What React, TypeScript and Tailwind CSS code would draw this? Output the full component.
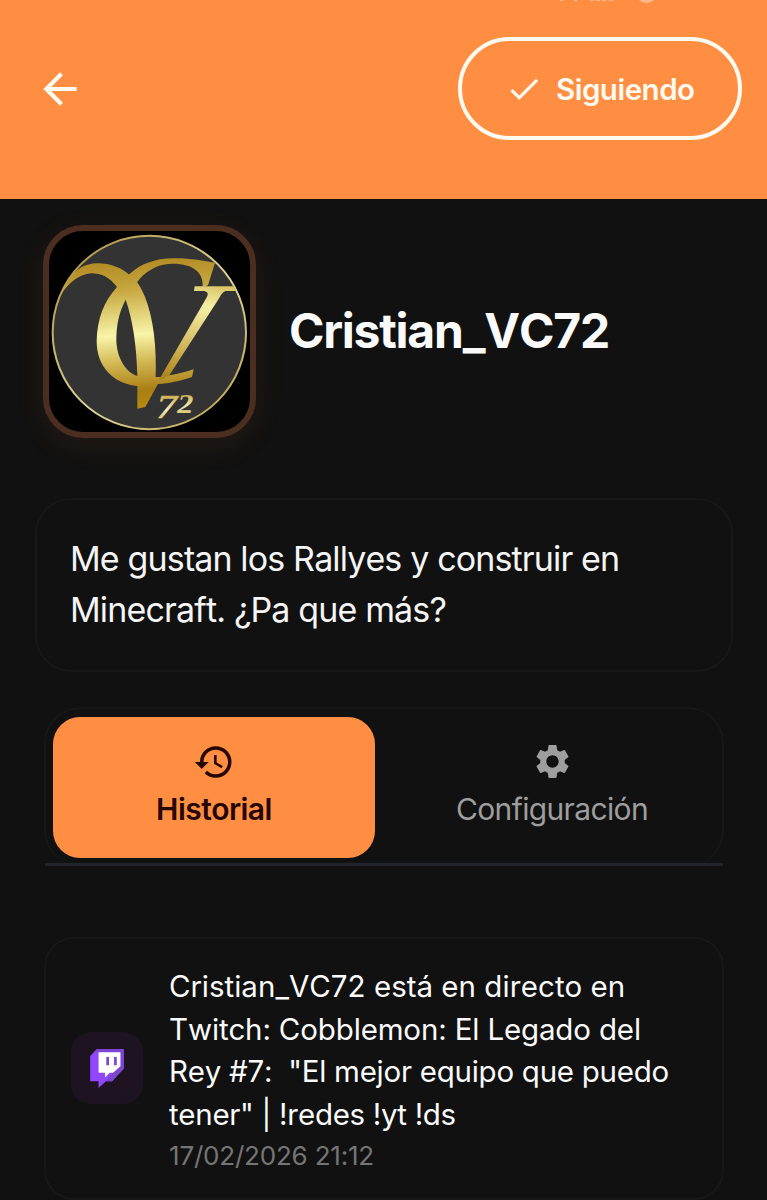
import { MdArrowBack, MdCheck, MdHistory, MdSettings } from "react-icons/md";

const bio = [
  { text: "Me gustan los Rallyes y construir en", spacing: "tracking-[-0.850px]" },
  { text: "Minecraft. ¿Pa que más?", spacing: "tracking-[-0.850px]" },
];

const event = [
  { text: "Cristian_VC72 está en directo en", spacing: "tracking-[0.030px]" },
  { text: "Twitch: Cobblemon: El Legado del", spacing: "tracking-[-0.150px]" },
  { text: 'Rey #7:  "El mejor equipo que puedo', spacing: "tracking-[-0.260px]" },
  { text: 'tener" | !redes !yt !ds', spacing: "tracking-[-0.300px]" },
];

function Avatar() {
  return (
    <div className="h-[213px] w-[213px] shrink-0 overflow-hidden rounded-[40px] border-[6px] border-[#4b2e20] bg-black shadow-[0_8px_32px_rgba(255,142,67,0.08)]">
      <svg viewBox="87 95 603 603" className="block h-full w-full">
        <defs>
          <linearGradient id="gold" gradientUnits="userSpaceOnUse" x1="350" y1="180" x2="385" y2="628">
            <stop offset="0" stopColor="#b18a22" />
            <stop offset="0.2" stopColor="#c8a840" />
            <stop offset="0.5" stopColor="#f8f5a8" />
            <stop offset="0.68" stopColor="#d3b854" />
            <stop offset="0.88" stopColor="#a97d12" />
            <stop offset="1" stopColor="#b98c14" />
          </linearGradient>
          <linearGradient id="goldThin" gradientUnits="userSpaceOnUse" x1="560" y1="190" x2="480" y2="545">
            <stop offset="0" stopColor="#c3a02f" />
            <stop offset="0.35" stopColor="#f4efa6" />
            <stop offset="0.65" stopColor="#d9c26a" />
            <stop offset="1" stopColor="#ad8318" />
          </linearGradient>
          <linearGradient id="digits" x1="0" y1="0" x2="0" y2="1">
            <stop offset="0.2" stopColor="#c9a94a" />
            <stop offset="0.6" stopColor="#f6efc0" />
            <stop offset="1" stopColor="#cba93c" />
          </linearGradient>
          <linearGradient id="ring" x1="0" y1="0" x2="1" y2="1">
            <stop offset="0" stopColor="#a88a36" />
            <stop offset="0.55" stopColor="#e0d79a" />
            <stop offset="1" stopColor="#b79a46" />
          </linearGradient>
        </defs>
        <circle cx="388" cy="399.500" r="290" fill="#333333" stroke="url(#ring)" strokeWidth="6" />
        {/* C */}
        <path
          fill="url(#gold)"
          d="M585 190L564 258L548 264C552 220 520 192 455 193C410 194 372 218 350 250C338 270 326 286 317 301C296 340 289 380 289 425C291 475 316 518 352 530L407 533L420 533C455 529 490 520 521 510L516 533C480 546 445 552 415 554L352 560C282 553 230 505 230 425C231 360 252 305 291 263C305 243 318 231 332 221C360 196 405 177 458 177C510 176 550 184 585 190Z"
        />
        {/* V */}
        <path
          fill="url(#gold)"
          d="M123 285C130 265 137 252 147 240C165 210 195 193 232 192C272 192 305 206 328 226C350 240 362 262 374 290C402 360 410 450 407 533L415 552L376 623L352 628V530C350 440 338 360 317 301L291 263C270 235 245 222 213 222C175 225 146 252 123 285Z"
        />
        <path
          fill="url(#goldThin)"
          d="M524 261H640L648 275H616C606 280 601 290 594 302L447 529L415 545L559 296C568 282 562 275 548 275H522Z"
        />
        <text
          transform="translate(409 655) scale(1.2 1)"
          fontSize="104"
          fontStyle="italic"
          fontFamily="Liberation Serif, serif"
          fill="url(#digits)"
          stroke="url(#digits)"
          strokeWidth="2"
        >
          7
        </text>
        <text
          transform="translate(472 640) scale(1.2 1)"
          fontSize="81"
          fontStyle="italic"
          fontWeight="700"
          fontFamily="Liberation Serif, serif"
          fill="url(#digits)"
        >
          2
        </text>
      </svg>
    </div>
  );
}

function TwitchLogo() {
  return (
    <svg viewBox="210 387 100 116" className="h-[39px] w-[34px]">
      <path fill="#9146ff" d="M230 387H310V445L275 483H257L235 503V483H210V408Z" />
      <path fill="#7c46d2" d="M230 387H310V445L275 483H257L277 458L300 438V397H235L222 395Z" />
      <path fill="#ffffff" d="M235 397H300V438L278 458H268L254 472V458H235Z" />
      <path fill="#7c46d2" d="M258 411H266V435H258ZM281 411H289V435H281Z" />
    </svg>
  );
}

export default function App() {
  return (
    <div className="h-[1200px] w-[767px] overflow-hidden bg-[#111111] font-['Inter',sans-serif] [font-kerning:none]">
      <header className="relative flex h-[199px] items-start justify-between bg-[#ff8e43] pt-[37px] pr-[25px] pl-[35px]">
        {/* bottom edge of the status bar icons */}
        <svg viewBox="0 0 100 4" className="absolute top-0 left-[560px] h-1 w-[100px]" fill="#fdb98b">
          <circle cx="86.500" cy="-8" r="11" />
          <path d="M0 0h3v1H0zM14 0h3v1h-3zM30 0h4v1h-4zM36 0h4v1h-4zM42 0h4v1h-4zM49 0h4v1h-4z" />
        </svg>
        <button className="mt-[27px]">
          <MdArrowBack className="h-[50px] w-[50px] text-[#fffaf0]" />
        </button>
        <button className="flex h-[103px] w-[284px] items-center rounded-full border-[4.500px] border-[#fffaf0] pl-[43px] text-[#fffaf0]">
          <MdCheck className="h-[38px] w-[38px] shrink-0" />
          <span className="ml-[13px] pt-0.5 text-[29.500px] font-semibold tracking-[-0.500px]">Siguiendo</span>
        </button>
      </header>

      <section className="flex items-center pt-[26px] pl-[43px]">
        <Avatar />
        <h1 className="ml-[33px] pb-px text-[48px] leading-[60px] font-bold tracking-[-1.200px] whitespace-nowrap text-[#fafafa]">
          Cristian_VC72
        </h1>
      </section>

      <section className="mt-[60px] ml-[35px] h-[174px] w-[698px] rounded-[36px] border-2 border-[#17181a] pt-[33px] pl-[33px]">
        {bio.map((line) => (
          <p key={line.text} className={`text-[34px] leading-[51px] whitespace-pre text-[#f5f5f5] ${line.spacing}`}>
            {line.text}
          </p>
        ))}
      </section>

      <nav className="mt-[35px] ml-11 flex h-[159px] w-[680px] rounded-[36px] border-2 border-b-0 border-[#17181a]">
        <div className="-mx-px flex w-[678px] shrink-0 items-start border-b-[3px] border-[#20252b] pt-2 pl-2">
          <button className="flex h-[141px] w-[322px] flex-col items-center rounded-[27px] bg-[#ff8e43] pt-6 text-[#260700]">
            <MdHistory className="h-[42px] w-[42px]" />
            <span className="mt-1.5 text-[30px] leading-10 font-semibold tracking-[-0.500px]">Historial</span>
          </button>
          <button className="ml-4 flex h-[141px] w-[322px] flex-col items-center pt-6 text-[#9e9e9e]">
            <MdSettings className="h-[41px] w-[41px]" />
            <span className="mt-[7px] text-[30px] leading-10 tracking-[-0.650px]">Configuración</span>
          </button>
        </div>
      </nav>

      <article className="mt-[71px] ml-11 flex h-[263px] w-[680px] rounded-[30px] border-2 border-[#17181a]">
        <div className="mt-[93px] ml-[25px] flex h-[72px] w-[72px] shrink-0 items-center justify-center rounded-[20px] bg-[#1e1320]">
          <TwitchLogo />
        </div>
        <div className="mt-[26px] ml-[26px]">
          {event.map((line) => (
            <p key={line.text} className={`text-[29.500px] leading-[42.700px] whitespace-pre text-[#fafafa] ${line.spacing}`}>
              {line.text}
            </p>
          ))}
          <p className="text-[26px] leading-10 tracking-[-0.200px] text-[#757575]">17/02/2026 21:12</p>
        </div>
      </article>
    </div>
  );
}
